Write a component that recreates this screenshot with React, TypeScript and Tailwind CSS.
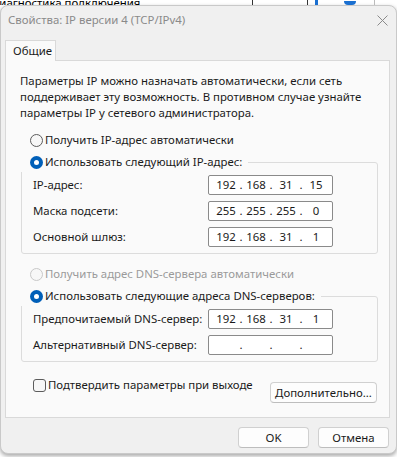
import React from "react";

const font = { fontFamily: '"Noto Sans", "Liberation Sans", sans-serif' };

function Radio({ checked, disabled }: { checked?: boolean; disabled?: boolean }) {
  if (checked) {
    return (
      <span className="flex h-[13px] w-[13px] shrink-0 items-center justify-center rounded-full bg-[#005fb8]">
        <span className="h-[5px] w-[5px] rounded-full bg-white" />
      </span>
    );
  }
  return (
    <span
      className={`h-[13px] w-[13px] shrink-0 rounded-full border bg-[#f7f7f7] ${
        disabled ? "border-[#c8c8c8]" : "border-[#5c5c5c]"
      }`}
    />
  );
}

function IpField({ parts }: { parts: string[] }) {
  return (
    <div className="flex h-[20px] w-[125px] shrink-0 items-center rounded-[2px] border border-[#8a8a8a] bg-white pl-[4px]">
      {parts.map((p, i) => (
        <React.Fragment key={i}>
          <span className="w-[26px] text-center">{p}</span>
          {i < 3 && <span className="w-[4px] text-center">.</span>}
        </React.Fragment>
      ))}
    </div>
  );
}

function Row({ label, parts }: { label: string; parts: string[] }) {
  return (
    <div className="flex h-[20px] items-center justify-between pl-[11px] pr-[44px]">
      <span className="whitespace-nowrap">{label}</span>
      <IpField parts={parts} />
    </div>
  );
}

function Group({
  legend,
  children,
}: {
  legend: string;
  children: React.ReactNode;
}) {
  return (
    <div className="ml-[15px] mr-[11px]">
      <div className="relative z-10 -mb-[10px] flex h-[20px] w-fit items-center gap-[2px] bg-[#fafafa] pl-[9px] pr-[6px]">
        <Radio checked />
        <span className="whitespace-nowrap">{legend}</span>
      </div>
      <div className="rounded-[3px] border border-[#dcdcdc]">{children}</div>
    </div>
  );
}

function Button({ children, w }: { children: React.ReactNode; w: string }) {
  return (
    <div
      className={`flex h-[21px] items-center justify-center rounded-[4px] border border-[#d0d0d0] border-b-[#bdbdbd] bg-[#fdfdfd] ${w}`}
    >
      {children}
    </div>
  );
}

export default function App() {
  return (
    <div className="h-[457px] w-[397px] overflow-hidden bg-white text-[11.4px] text-[#1a1a1a]" style={font}>
      {/* background window strip */}
      <div className="flex h-[5px] items-end overflow-hidden">
        <span className="-mb-[4px] -ml-[9px] whitespace-nowrap leading-[12px] text-black">
          Диагностика подключения
        </span>
        <span className="ml-[112px] h-[5px] w-px bg-[#333]" />
        <span className="ml-[54px] h-[5px] w-px bg-[#333]" />
        <span className="ml-[7px] h-[5px] w-[3px] bg-[#1a6fd0]" />
        <span className="ml-[26px] h-[4px] w-[12px] rounded-b-full bg-[#1a6fd0]" />
        <span className="ml-[18px] h-[5px] w-px bg-[#bbb]" />
      </div>

      {/* dialog */}
      <div className="flex h-[449px] flex-col rounded-lg border border-[#c9c9c9] bg-[#f0f0f0] shadow-[0_2px_4px_rgba(0,0,0,0.35)]">
        <div className="flex h-[28px] shrink-0 items-center justify-between pl-[7px] pr-[8px]">
          <span className="text-[#8a8a8a]">Свойства: IP версии 4 (TCP/IPv4)</span>
          <svg width="11" height="11" viewBox="0 0 11 11">
            <path d="M0.5 0.5 L10.5 10.5 M10.5 0.5 L0.5 10.5" stroke="#8a8a8a" strokeWidth="1" />
          </svg>
        </div>

        <div className="mt-[6px] px-[4px]">
          <div className="relative z-10 -mb-px flex h-[21px] w-[51px] items-center border border-b-0 border-[#d9d9d9] bg-[#fafafa] pl-[7px]">
            Общие
          </div>
          <div className="h-[358px] w-[385px] border border-[#d9d9d9] bg-[#fafafa]">
            <p className="pl-[14px] pr-[10px] pt-[12px] leading-[16px]">
              Параметры IP можно назначать автоматически, если сеть поддерживает эту возможность. В противном случае узнайте параметры IP у сетевого администратора.
            </p>

            <div className="mt-[9px] flex h-[20px] items-center gap-[2px] pl-[24px]">
              <Radio />
              <span>Получить IP-адрес автоматически</span>
            </div>

            <div className="mt-[2px]">
              <Group legend="Использовать следующий IP-адрес:">
                <div className="flex flex-col gap-[6px] pb-[6px] pt-[12px]">
                  <Row label="IP-адрес:" parts={["192", "168", "31", "15"]} />
                  <Row label="Маска подсети:" parts={["255", "255", "255", "0"]} />
                  <Row label="Основной шлюз:" parts={["192", "168", "31", "1"]} />
                </div>
              </Group>
            </div>

            <div className="mt-[10px] flex h-[20px] items-center gap-[2px] pl-[24px] text-[#9a9a9a]">
              <Radio disabled />
              <span>Получить адрес DNS-сервера автоматически</span>
            </div>

            <div className="mt-[2px]">
              <Group legend="Использовать следующие адреса DNS-серверов:">
                <div className="flex flex-col gap-[6px] pb-[6px] pt-[12px]">
                  <Row label="Предпочитаемый DNS-сервер:" parts={["192", "168", "31", "1"]} />
                  <Row label="Альтернативный DNS-сервер:" parts={["", "", "", ""]} />
                </div>
              </Group>
            </div>

            <div className="mt-[13px] flex items-start justify-between pl-[27px] pr-[12px]">
              <div className="flex h-[20px] items-center gap-[2px]">
                <span className="h-[13px] w-[13px] rounded-[3px] border border-[#5c5c5c] bg-[#f7f7f7]" />
                <span>Подтвердить параметры при выходе</span>
              </div>
              <div className="mt-[7px]">
                <Button w="w-[107px]">Дополнительно...</Button>
              </div>
            </div>
          </div>
        </div>

        <div className="mt-[9px] flex justify-end gap-[9px] pr-[7px]">
          <Button w="w-[71px]">OK</Button>
          <Button w="w-[71px]">Отмена</Button>
        </div>
      </div>
    </div>
  );
}
